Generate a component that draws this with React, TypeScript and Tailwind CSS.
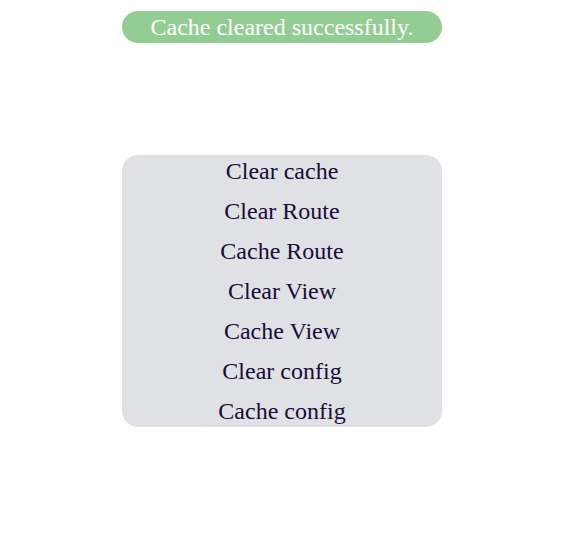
const actions = [
  "Clear cache",
  "Clear Route",
  "Cache Route",
  "Clear View",
  "Cache View",
  "Clear config",
  "Cache config",
];

export default function App() {
  return (
    <div className="flex flex-col items-center w-full h-[535px] bg-white pt-[11px] pr-2 font-['Liberation_Serif',serif]">
      <div className="w-[320px] h-[32px] rounded-full bg-[#94cd93] text-white text-[24px] leading-[32px] text-center">
        Cache cleared successfully.
      </div>
      <div className="mt-[112px] w-[320px] flex flex-col gap-2 rounded-2xl bg-[#dfe1e4]">
        {actions.map((a) => (
          <button
            key={a}
            className="h-8 leading-8 text-[24px] text-center text-[#1a0b38] cursor-pointer"
          >
            {a}
          </button>
        ))}
      </div>
    </div>
  );
}
